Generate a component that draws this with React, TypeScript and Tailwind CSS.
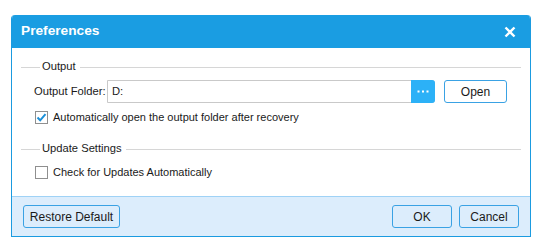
import React, { useState } from 'react';

const font = { fontFamily: '"Liberation Sans", Arial, sans-serif' };

const Check: React.FC<{ checked: boolean; onChange: () => void; label: string }> = ({ checked, onChange, label }) => (
  <label className="flex items-center gap-[5px] h-[16px] cursor-default" onClick={onChange}>
    <span className="w-[13px] h-[13px] border border-[#8f8f8f] bg-white flex items-center justify-center">
      {checked && (
        <svg width="11" height="11" viewBox="0 0 11 11">
          <path d="M1.5 5.5 L4.2 8.3 L9.5 2.2" fill="none" stroke="#1b8fd8" strokeWidth="2" />
        </svg>
      )}
    </span>
    <span className="text-[11px] leading-[16px] text-[#1a1a1a] whitespace-nowrap">{label}</span>
  </label>
);

const GroupTitle: React.FC<{ title: string }> = ({ title }) => (
  <div className="flex items-center h-[14px]">
    <div className="w-[19px] h-px bg-[#d6d6d6]" />
    <span className="px-[2px] text-[11.2px] text-[#1a1a1a] leading-none whitespace-nowrap">{title}</span>
    <div className="flex-1 h-px bg-[#d6d6d6] ml-[2px]" />
  </div>
);

export default function App() {
  const [autoOpen, setAutoOpen] = useState(true);
  const [checkUpdates, setCheckUpdates] = useState(false);

  return (
    <div className="w-[550px] h-[252px] bg-white pt-[15px] pl-[11px]" style={font}>
      <div className="w-[520px] h-[222px] border-x border-b border-[#1b9be0] rounded-t-[4px] flex flex-col overflow-hidden">
        {/* title bar */}
        <div className="h-[33px] bg-[#1a9de2] flex items-center justify-between pl-[10px] pr-[15px] -mx-px shrink-0">
          <span className="text-white font-bold text-[13.7px]">Preferences</span>
          <svg width="12" height="12" viewBox="0 0 12 12">
            <path d="M1.5 1.5 L10.5 10.5 M10.5 1.5 L1.5 10.5" stroke="white" strokeWidth="2.4" />
          </svg>
        </div>

        {/* body */}
        <div className="flex-1 bg-white pl-[9px] pr-[9px] pt-[12px]">
          <GroupTitle title="Output" />
          <div className="flex items-center mt-[6px] h-[23px]">
            <span className="text-[11.2px] text-[#1a1a1a] ml-[13px] w-[73px] whitespace-nowrap">Output Folder:</span>
            <div className="flex h-[23px] w-[328px] border border-[#c9c9c9] rounded-r-[3px]">
              <input
                className="flex-1 min-w-0 outline-none px-[4px] text-[11.2px] text-[#1a1a1a] bg-white"
                defaultValue="D:"
              />
              <button className="w-[24px] h-[23px] -my-px -mr-px bg-[#2cb1f7] rounded-r-[3px] flex items-center justify-center">
                <svg width="12" height="3" viewBox="0 0 12 3">
                  <rect x="0.5" y="0.5" width="2" height="2" fill="white" />
                  <rect x="5" y="0.5" width="2" height="2" fill="white" />
                  <rect x="9.5" y="0.5" width="2" height="2" fill="white" />
                </svg>
              </button>
            </div>
            <button className="ml-[9px] w-[63px] h-[23px] border border-[#3aa2e4] rounded-[3px] bg-white text-[12px] text-[#1a1a1a]">
              Open
            </button>
          </div>
          <div className="mt-[6px] ml-[14px]">
            <Check checked={autoOpen} onChange={() => setAutoOpen(!autoOpen)} label="Automatically open the output folder after recovery" />
          </div>

          <div className="mt-[17px]">
            <GroupTitle title="Update Settings" />
          </div>
          <div className="mt-[8px] ml-[14px]">
            <Check checked={checkUpdates} onChange={() => setCheckUpdates(!checkUpdates)} label="Check for Updates Automatically" />
          </div>
        </div>

        {/* footer */}
        <div className="h-[40px] shrink-0 bg-[#dcedfc] border-t border-[#9fd2f6] flex items-center px-[11px]">
          <button className="w-[97px] h-[23px] border border-[#3aa2e4] rounded-[3px] bg-[#dcedfc] text-[12px] text-[#1a1a1a]">
            Restore Default
          </button>
          <div className="flex-1" />
          <button className="w-[60px] h-[23px] border border-[#3aa2e4] rounded-[3px] bg-[#dcedfc] text-[12px] text-[#1a1a1a]">
            OK
          </button>
          <button className="ml-[7px] w-[60px] h-[23px] border border-[#3aa2e4] rounded-[3px] bg-[#dcedfc] text-[12px] text-[#1a1a1a]">
            Cancel
          </button>
        </div>
      </div>
    </div>
  );
}
